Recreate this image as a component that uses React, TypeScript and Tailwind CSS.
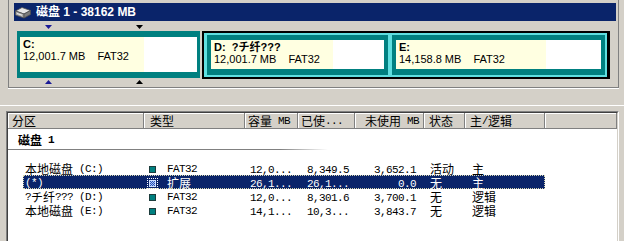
import React from 'react';

const CJK = /([\u2E80-\u9FFF\uFF00-\uFFEF]+)/;

// splits a label into CJK / latin runs so each gets the right face and width
const Mixed: React.FC<{ text: string; bold?: boolean }> = ({ text, bold }) => {
  const parts = text.split(CJK).filter(Boolean);
  return (
    <>
      {parts.map((p, i) =>
        CJK.test(p) ? (
          <span key={i} className={`font-['Noto_Sans_CJK_SC',sans-serif] text-[12px] leading-[14px] ${bold ? 'font-bold' : ''}`}>
            {p}
          </span>
        ) : (
          <span
            key={i}
            className={`font-['Liberation_Mono',monospace] text-[11px] leading-[14px] tracking-[-0.6px] whitespace-pre ${bold ? 'font-bold' : ''}`}
          >
            {p}
          </span>
        )
      )}
    </>
  );
};

const DownTri: React.FC<{ color: string }> = ({ color }) => (
  <svg width="7" height="4" viewBox="0 0 7 4" className="block">
    <polygon points="0,0 7,0 3.5,4" fill={color} />
  </svg>
);

const UpTri: React.FC<{ color: string }> = ({ color }) => (
  <svg width="7" height="4" viewBox="0 0 7 4" className="block">
    <polygon points="0,4 7,4 3.5,0" fill={color} />
  </svg>
);

const DriveIcon = () => (
  <svg width="16" height="13" viewBox="0 0 16 13" className="block">
    <polygon points="0.5,5 7,1.5 15.5,4.5 9,8" fill="#e6e6e6" stroke="#505050" strokeWidth="0.8" />
    <polygon points="0.5,5 9,8 9,12 0.5,9" fill="#a8a8a8" stroke="#505050" strokeWidth="0.8" />
    <polygon points="9,8 15.5,4.5 15.5,8.5 9,12" fill="#7c7c7c" stroke="#505050" strokeWidth="0.8" />
    <line x1="2" y1="7.5" x2="7" y2="9.2" stroke="#ffffff" strokeWidth="0.8" />
  </svg>
);

const PartText: React.FC<{ label: string; size: string }> = ({ label, size }) => (
  <div className="pl-[3px] pt-[1px] text-[11px] leading-[12px] whitespace-nowrap">
    <div className="font-bold whitespace-pre">{label}</div>
    <div className="flex">
      <span>{size}</span>
      <span className="ml-[12px]">FAT32</span>
    </div>
  </div>
);

const rows = [
  { name: '本地磁盘 (C:)', type: 'FAT32', cap: '12,0...', used: '8,349.5', free: '3,652.1', status: '活动', kind: '主' },
  { name: '(*)', type: '扩展', cap: '26,1...', used: '26,1...', free: '0.0', status: '无', kind: '主', selected: true },
  { name: '?チ纤??? (D:)', type: 'FAT32', cap: '12,0...', used: '8,301.6', free: '3,700.1', status: '无', kind: '逻辑' },
  { name: '本地磁盘 (E:)', type: 'FAT32', cap: '14,1...', used: '10,3...', free: '3,843.7', status: '无', kind: '逻辑' },
];

const headers = [
  { label: '分区', pad: 'pl-[4px]' },
  { label: '类型', pad: 'pl-[6px]' },
  { label: '容量 MB', pad: 'pl-[3px]' },
  { label: '已使...', pad: 'pl-[3px]' },
  { label: '未使用 MB', pad: 'pl-[10px]' },
  { label: '状态', pad: 'pl-[5px]' },
  { label: '主/逻辑', pad: 'pl-[5px]' },
  { label: '', pad: '' },
];

export default function App() {
  return (
    <div className="w-[624px] h-[241px] overflow-hidden bg-[#d4d0c8] text-black font-['Liberation_Sans','Noto_Sans_CJK_SC',sans-serif]">
      {/* graphical view */}
      <div className="ml-[8px] w-[611px] h-[88px] border-l border-r border-b border-[#808080] shadow-[0_1px_0_#ffffff] pt-[3px]">
        <div className="ml-[5px] mr-[2px] h-[18px] bg-[#0a246a] flex items-center pl-[1px] text-white">
          <DriveIcon />
          <span className="ml-[5px] text-[12px] font-bold leading-[14px] whitespace-nowrap">磁盘 1 - 38162 MB</span>
        </div>

        <div className="h-[10px] pt-[4px] flex">
          <div className="ml-[36px]">
            <DownTri color="#1a1a96" />
          </div>
          <div className="ml-[84px]">
            <DownTri color="#000000" />
          </div>
        </div>

        <div className="flex items-start ml-[8px]">
          <div className="w-[183px] h-[47px] border-x-[3px] border-y-[6px] border-[#008080] flex">
            <div className="w-[124px] bg-[#ffffe1]">
              <PartText label="C:" size="12,001.7 MB" />
            </div>
            <div className="flex-1 bg-white" />
          </div>

          <div className="ml-[2px] w-[408px] h-[48px] border-2 border-r-[3px] border-black bg-[#5fdfe0] pl-[3px] pr-[2px] py-[2px] flex gap-[4px]">
            <div className="w-[181px] h-[40px] border-x-[4px] border-t-[5px] border-b-[6px] border-[#008080] flex">
              <div className="w-[122px] bg-[#ffffe1]">
                <PartText label="D:  ?チ纤???" size="12,001.7 MB" />
              </div>
              <div className="flex-1 bg-white" />
            </div>
            <div className="w-[213px] h-[40px] border-x-[4px] border-t-[5px] border-b-[6px] border-[#008080] flex">
              <div className="w-[150px] bg-[#ffffe1]">
                <PartText label="E:" size="14,158.8 MB" />
              </div>
              <div className="flex-1 bg-white" />
            </div>
          </div>
        </div>

        <div className="pt-[1px] flex">
          <div className="ml-[36px]">
            <UpTri color="#1a1a96" />
          </div>
          <div className="ml-[84px]">
            <UpTri color="#000000" />
          </div>
        </div>
      </div>

      <div className="h-[17px]" />
      <div className="h-px bg-white" />
      <div className="h-[5px]" />

      {/* list view */}
      <div className="ml-[6px] w-[613px] h-[140px] border border-[#808080] border-r-white border-b-white">
        <div className="h-full border border-[#404040] border-r-[#d4d0c8] border-b-[#d4d0c8] bg-white">
          <div className="grid grid-cols-[136px_101px_53px_57px_69px_41px_80px_1fr] h-[16px] bg-[#d4d0c8]">
            {headers.map((h, i) => (
              <div
                key={i}
                className={`h-[16px] border-r border-b border-[#808080] shadow-[inset_1px_1px_0_#ffffff] flex items-center pt-px leading-[14px] whitespace-nowrap ${h.pad}`}
              >
                <Mixed text={h.label} />
              </div>
            ))}
          </div>

          <div className="mt-[4px] h-[14px] leading-[14px] pl-[10px] flex items-center">
            <Mixed text="磁盘 1" bold />
          </div>
          <div className="mt-[2px] h-px w-[320px] bg-[linear-gradient(to_right,#808080_85%,#ffffff)]" />

          <div className="mt-[11px]">
            {rows.map((r, i) => (
              <div
                key={i}
                className={`ml-[15px] w-[522px] h-[14px] leading-[14px] grid grid-cols-[121px_101px_53px_57px_69px_41px_80px] items-center whitespace-nowrap ${
                  r.selected ? 'bg-[#0a246a] text-white outline-1 outline-dotted outline-[#d8d8b0] -outline-offset-1' : ''
                }`}
              >
                <div className="pl-[2px] flex items-center">
                  <Mixed text={r.name} />
                </div>
                <div className="pl-[3px] flex items-center">
                  {r.selected ? (
                    <div className="w-[11px] h-[11px] border border-dotted border-white flex items-center justify-center">
                      <div className="w-[7px] h-[7px] border border-[#cfe0ff] bg-[image:repeating-conic-gradient(#a8c4f4_0_25%,#2850b8_0_50%)] bg-[length:2px_2px]" />
                    </div>
                  ) : (
                    <div className="w-[11px] h-[11px] flex items-center justify-center">
                      <div className="w-[7px] h-[7px] border border-[#1c3c3c] bg-[#008080]" />
                    </div>
                  )}
                  <span className="ml-[9px] flex items-center">
                    <Mixed text={r.type} />
                  </span>
                </div>
                <div className="pr-[6px] text-right">
                  <Mixed text={r.cap} />
                </div>
                <div className="pr-[6px] text-right">
                  <Mixed text={r.used} />
                </div>
                <div className="pr-[8px] text-right">
                  <Mixed text={r.free} />
                </div>
                <div className="pl-[6px]">
                  <Mixed text={r.status} />
                </div>
                <div className="pl-[7px]">
                  <Mixed text={r.kind} />
                </div>
              </div>
            ))}
          </div>
        </div>
      </div>
    </div>
  );
}
